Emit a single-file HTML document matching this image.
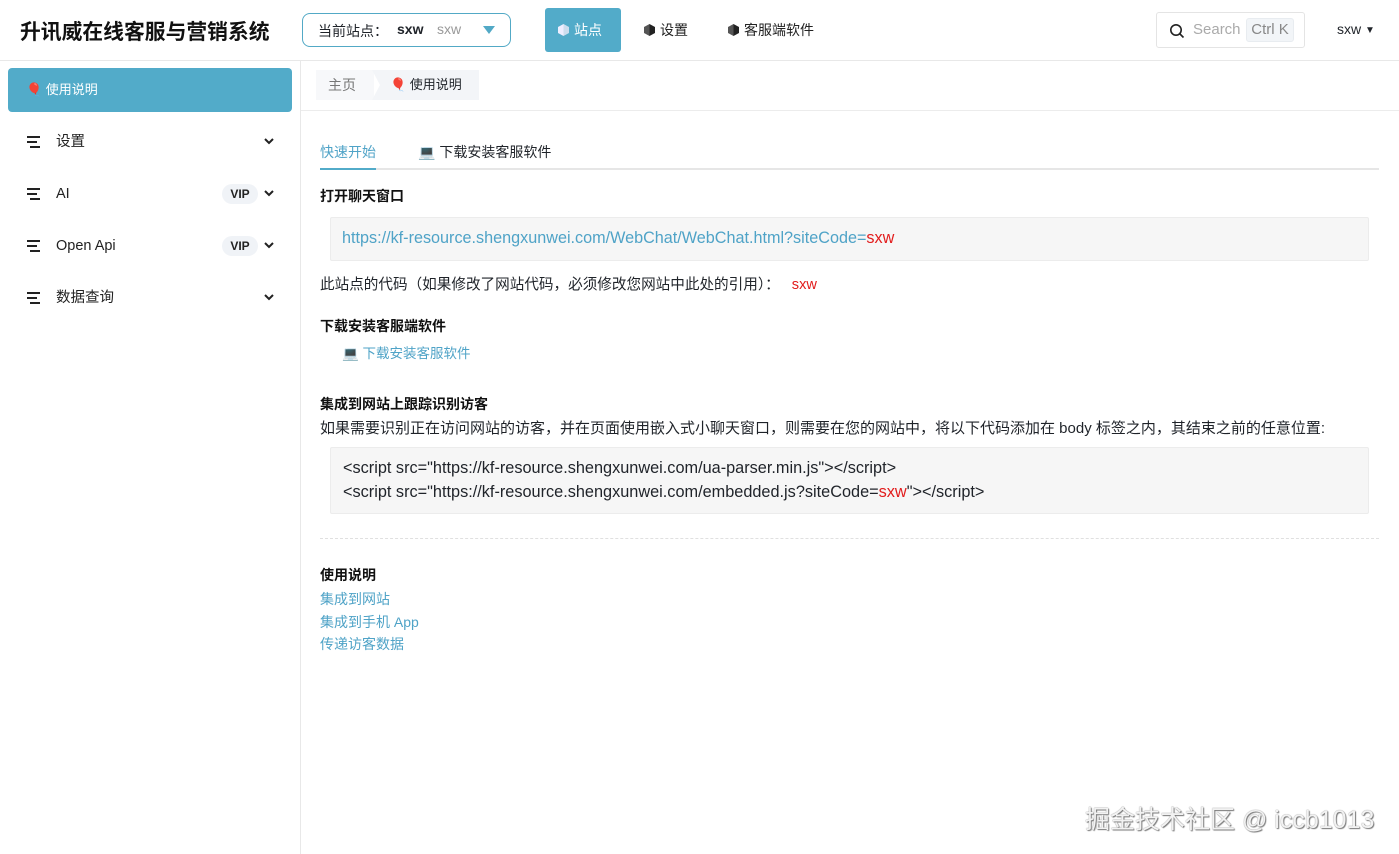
<!DOCTYPE html>
<html><head><meta charset="utf-8"><style>
*{box-sizing:border-box;margin:0;padding:0}
body{width:1399px;height:854px;overflow:hidden;background:#fff;font-family:"Liberation Sans","Noto Sans CJK SC",sans-serif;font-size:14px;color:#1f2329;position:relative}
.abs{position:absolute}
.hdr{left:0;top:0;width:1399px;height:61px;border-bottom:1px solid #e8e8e8}
.logo{left:20px;top:15px;font-size:20.8px;font-weight:bold;color:#111}
.site{left:302px;top:13px;width:209px;height:34px;border:1px solid #52a9c6;border-radius:8px;font-size:14px}
.nav{top:8px;height:44px;line-height:44px;font-size:14px;color:#222;padding:0 10px}
.cube{display:inline-block;width:11px;height:12px;vertical-align:-1px;margin-right:5px;background:linear-gradient(90deg,#555 50%,#222 50%);clip-path:polygon(50% 0,100% 25%,100% 75%,50% 100%,0 75%,0 25%)}
.side{left:0;top:61px;width:301px;height:793px;border-right:1px solid #e8e8e8}
.mi{left:0;width:300px;height:52px;font-size:14.5px;color:#222}
.mi .ic{position:absolute;left:27px;top:3px}
.mi .t{position:absolute;left:56px;top:0;line-height:18px}
.vip{position:absolute;left:222px;top:-1px;width:36px;height:20px;border-radius:10px;background:#f0f3f7;font-size:12px;font-weight:bold;text-align:center;line-height:20px}
.chev{position:absolute;left:263px;top:-3px}
a,.lk{color:#4fa3c7;text-decoration:none}
.red{color:#e21c1c}
.h{font-weight:bold;font-size:14px;color:#111}
.code{background:#f6f6f6;border:1px solid #ececec;border-radius:2px}
</style></head><body>
<div class="abs hdr"></div>
<div class="abs logo">升讯威在线客服与营销系统</div>
<div class="abs site"><span class="abs" style="left:15px;top:7px">当前站点：</span><b class="abs" style="left:94px;top:7px">sxw</b><span class="abs" style="left:134px;top:7px;color:#999">sxw</span><span class="abs" style="left:180px;top:12px;width:0;height:0;border-left:6px solid transparent;border-right:6px solid transparent;border-top:8px solid #52a9c6"></span></div>
<div class="abs nav" style="left:545px;width:76px;background:#52abc9;border-radius:3px;color:#fff;padding:0 0 0 13px"><span class="cube" style="background:linear-gradient(90deg,#eef 50%,#cde 50%)"></span>站点</div>
<div class="abs nav" style="left:634px"><span class="cube"></span>设置</div>
<div class="abs nav" style="left:718px"><span class="cube"></span>客服端软件</div>
<div class="abs" style="left:1156px;top:12px;width:149px;height:36px;border:1px solid #e4e4e4;border-radius:3px">
<svg class="abs" style="left:12px;top:10px" width="16" height="16" viewBox="0 0 16 16"><circle cx="7" cy="7" r="5.2" fill="none" stroke="#222" stroke-width="1.6"/><path d="M11 11l3.5 3.5" stroke="#222" stroke-width="1.6"/></svg>
<span class="abs" style="left:36px;top:8px;color:#aaa;font-size:15px">Search</span>
<span class="abs" style="left:89px;top:5px;height:24px;width:48px;background:#f2f5f8;border:1px solid #e8ecf0;border-radius:3px;color:#888;font-size:15px;text-align:center;line-height:22px">Ctrl K</span></div>
<div class="abs" style="left:1337px;top:21px;font-size:14px">sxw <span style="font-size:10px;vertical-align:1px">▼</span></div>

<div class="abs side"></div>
<div class="abs" style="left:8px;top:68px;width:284px;height:44px;background:#52abc9;border-radius:4px;color:#fff;line-height:44px;padding-left:18px;font-size:13px">🎈 使用说明</div>
<div class="abs mi" style="top:133px"><svg class="ic" width="14" height="12" viewBox="0 0 14 12"><path d="M0 1h13M0 6h10M3 11h10" stroke="#222" stroke-width="2"/></svg><span class="t">设置</span><svg class="chev" width="12" height="24" viewBox="0 0 12 24"><path d="M2 9l4 4 4-4" fill="none" stroke="#222" stroke-width="2"/></svg></div>
<div class="abs mi" style="top:185px"><svg class="ic" width="14" height="12" viewBox="0 0 14 12"><path d="M0 1h13M0 6h10M3 11h10" stroke="#222" stroke-width="2"/></svg><span class="t">AI</span><span class="vip">VIP</span><svg class="chev" width="12" height="24" viewBox="0 0 12 24"><path d="M2 9l4 4 4-4" fill="none" stroke="#222" stroke-width="2"/></svg></div>
<div class="abs mi" style="top:237px"><svg class="ic" width="14" height="12" viewBox="0 0 14 12"><path d="M0 1h13M0 6h10M3 11h10" stroke="#222" stroke-width="2"/></svg><span class="t">Open Api</span><span class="vip">VIP</span><svg class="chev" width="12" height="24" viewBox="0 0 12 24"><path d="M2 9l4 4 4-4" fill="none" stroke="#222" stroke-width="2"/></svg></div>
<div class="abs mi" style="top:289px"><svg class="ic" width="14" height="12" viewBox="0 0 14 12"><path d="M0 1h13M0 6h10M3 11h10" stroke="#222" stroke-width="2"/></svg><span class="t">数据查询</span><svg class="chev" width="12" height="24" viewBox="0 0 12 24"><path d="M2 9l4 4 4-4" fill="none" stroke="#222" stroke-width="2"/></svg></div>

<div class="abs" style="left:301px;top:110px;width:1098px;border-top:1px solid #ececec"></div>
<div class="abs" style="left:316px;top:70px;width:58px;height:30px;background:#f7f8fa;color:#777;line-height:30px;padding-left:12px">主页</div>
<div class="abs" style="left:372px;top:70px;width:107px;height:30px;background:#f3f5f8;clip-path:polygon(0 0,100% 0,100% 100%,0 100%,8px 50%);line-height:30px;padding-left:18px;font-size:13px">🎈 使用说明</div>

<div class="abs" style="left:320px;top:142px;color:#4fa3c7">快速开始</div>
<div class="abs" style="left:418px;top:142px">💻 下载安装客服软件</div>
<div class="abs" style="left:320px;top:168px;width:1059px;height:2px;background:#e6e6e6"></div>
<div class="abs" style="left:320px;top:168px;width:56px;height:2px;background:#52abc9"></div>

<div class="abs h" style="left:320px;top:186px">打开聊天窗口</div>
<div class="abs code" style="left:330px;top:217px;width:1039px;height:44px"><span class="abs lk" style="left:11px;top:11px;font-size:16.2px">https://kf-resource.shengxunwei.com/WebChat/WebChat.html?siteCode=<span class="red">sxw</span></span></div>
<div class="abs" style="left:320px;top:273px;font-size:14.6px">此站点的代码（如果修改了网站代码，必须修改您网站中此处的引用）： <span class="red" style="margin-left:8px">sxw</span></div>
<div class="abs h" style="left:320px;top:316px">下载安装客服端软件</div>
<div class="abs lk" style="left:342px;top:342px;font-size:13.5px">💻 下载安装客服软件</div>
<div class="abs h" style="left:320px;top:394px">集成到网站上跟踪识别访客</div>
<div class="abs" style="left:320px;top:417px;font-size:15px;white-space:nowrap">如果需要识别正在访问网站的访客，并在页面使用嵌入式小聊天窗口，则需要在您的网站中，将以下代码添加在 body 标签之内，其结束之前的任意位置:</div>
<div class="abs code" style="left:330px;top:447px;width:1039px;height:67px;font-size:16.3px;line-height:24px;padding:8px 0 0 12px;white-space:nowrap">&lt;script src="https://kf-resource.shengxunwei.com/ua-parser.min.js"&gt;&lt;/script&gt;<br>&lt;script src="https://kf-resource.shengxunwei.com/embedded.js?siteCode=<span class="red">sxw</span>"&gt;&lt;/script&gt;</div>
<div class="abs" style="left:320px;top:538px;width:1059px;border-top:1px dashed #e0e0e0"></div>
<div class="abs h" style="left:320px;top:565px">使用说明</div>
<div class="abs lk" style="left:320px;top:588px;line-height:22.5px">集成到网站<br>集成到手机 App<br>传递访客数据</div>
<div class="abs" style="left:1085px;top:800px;font-size:25px;color:#f2f2f2;text-shadow:1px 1px 1px #777,0 0 1px #666">掘金技术社区 @ iccb1013</div>
</body></html>
